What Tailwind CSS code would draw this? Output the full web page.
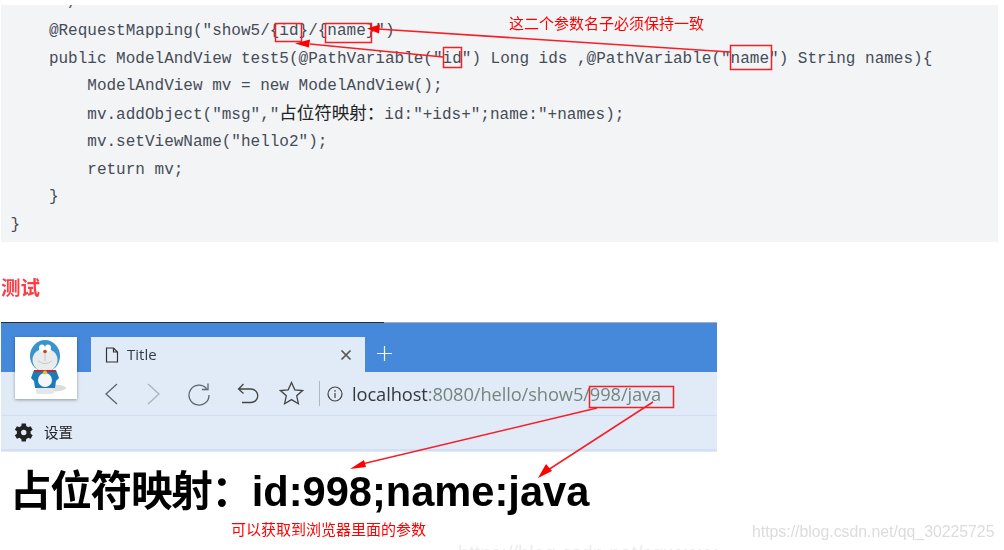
<!DOCTYPE html>
<html lang="en">
<head>
    <meta charset="UTF-8">
    <meta name="viewport" content="width=device-width, initial-scale=1.0">
    <title>占位符映射</title>
    <script src="https://cdn.jsdelivr.net/npm/@tailwindcss/browser@4"></script>
</head>
<body class="bg-white">
    <div class="relative w-[1004px] h-[550px] overflow-hidden blur-[0.35px] font-['Liberation_Sans','Noto_Sans_CJK_SC',sans-serif]">

        <!-- code block -->
        <div class="ml-[1px] mt-[5px] w-[997px] h-[237px] bg-[#f3f4f6] overflow-hidden">
            <pre class="-mt-[14.5px] pl-[9.5px] font-['Liberation_Mono','Noto_Sans_CJK_SC',monospace] text-[16px] leading-[27.57px] text-[#454c56]">     */
    @RequestMapping("show5/{id}/{name}")
    public ModelAndView test5(@PathVariable("id") Long ids ,@PathVariable("name") String names){
        ModelAndView mv = new ModelAndView();
        mv.addObject("msg","<span class="text-[17.5px] text-[#222]">占位符映射：</span>id:"+ids+";name:"+names);
        mv.setViewName("hello2");
        return mv;
    }
}</pre>
        </div>

        <h2 class="ml-[1px] mt-[35px] h-[45px] text-[19.5px] leading-[22px] font-bold text-[#fc3d45]">测试</h2>

        <!-- browser screenshot -->
        <div class="ml-[1px] w-[716px] h-[130px] flex flex-col bg-[#e1ebf8]">
            <div class="h-[1px] bg-[#a9adb2]"><div class="w-[383px] h-full bg-[#2c2c2c]"></div></div>
            <div class="h-[49px] flex items-end bg-[#4689db] pl-[90px]">
                <div class="w-[274px] h-[35px] bg-[#e1ebf8] flex items-center pl-[14px] pr-[13px]">
                    <svg class="w-[14px] h-[16px]" viewBox="0 0 14 16" fill="none" stroke="#333" stroke-width="1.2"><path d="M1.5 1h7l4 4v10h-11zM8.5 1v4h4"/></svg>
                    <span class="ml-[8px] text-[15px] text-[#333b45] font-['Open_Sans',sans-serif]">Title</span>
                    <svg class="ml-auto w-[12px] h-[12px]" viewBox="0 0 12 12" stroke="#555" stroke-width="1.7"><path d="M1.5 1.5l9 9M10.5 1.5l-9 9"/></svg>
                </div>
                <svg class="ml-[12px] mb-[11px] w-[15px] h-[15px]" viewBox="0 0 15 15" stroke="#f2f6fc" stroke-width="1.2"><path d="M7.5 0v15M0 7.5h15"/></svg>
            </div>
            <div class="h-[44px] flex items-center pl-[102px] border-b border-[#cfdef2]">
                <svg class="w-[16px] h-[24px]" viewBox="0 0 16 24" fill="none" stroke="#5b6570" stroke-width="1.3"><path d="M14 2L3 12l11 10"/></svg>
                <svg class="ml-[27px] w-[16px] h-[24px]" viewBox="0 0 16 24" fill="none" stroke="#aab2ba" stroke-width="1.3"><path d="M2 2l11 10L2 22"/></svg>
                <svg class="ml-[25px] w-[24px] h-[24px]" viewBox="0 0 24 24" fill="none" stroke="#5b6570" stroke-width="1.3"><path d="M19.5 6.5A10 10 0 1 0 22 13M21 1.5v6h-6"/></svg>
                <svg class="ml-[26px] w-[22px] h-[22px]" viewBox="0 0 22 22" fill="none" stroke="#444" stroke-width="1.3"><path d="M6.5 1L1.5 6l5 4.5M2 6h12a6.5 6.5 0 0 1 0 13.5H5"/></svg>
                <svg class="ml-[20px] w-[25px] h-[25px]" viewBox="0 0 25 25" fill="none" stroke="#444" stroke-width="1.3"><path d="M12.5 1.5l3.3 7.3 7.7.8-5.800 5.200 1.700 7.900-6.900-4.100-6.900 4.100 1.700-7.900-5.800-5.200 7.700-.8z"/></svg>
                <div class="ml-[15px] w-[1px] h-[25px] bg-[#aeb8c4]"></div>
                <svg class="ml-[7px] w-[16px] h-[16px]" viewBox="0 0 16 16" fill="none" stroke="#444" stroke-width="1.200"><circle cx="8" cy="8" r="7"/><path d="M8 7v5M8 4v1.800"/></svg>
                <span class="ml-[9px] text-[18.3px] font-['Open_Sans',sans-serif] text-[#33373d] tracking-[-0.1px]">localhost<span class="text-[#74867c]">:8080/hello/show5/998/java</span></span>
            </div>
            <div class="h-[35px] flex items-center pl-[12px] border-b-2 border-[#d3e0f3]">
                <svg class="w-[21px] h-[21px]" viewBox="0 0 24 24" fill="#222"><path d="M20.100 13.300a8 8 0 0 0 0-2.600l2.400-1.800-2.400-4.100-2.800 1.100a8 8 0 0 0-2.200-1.300L14.700 1.700H9.900l-.4 2.900a8 8 0 0 0-2.200 1.300L4.500 4.800 2.100 8.900l2.400 1.800a8 8 0 0 0 0 2.600l-2.400 1.800 2.400 4.100 2.800-1.100a8 8 0 0 0 2.200 1.300l.4 2.900h4.800l.4-2.900a8 8 0 0 0 2.200-1.300l2.800 1.100 2.400-4.100zM12.300 15.100a3.100 3.100 0 1 1 0-6.200 3.100 3.100 0 0 1 0 6.200z"/></svg>
                <span class="ml-[10px] mt-[2px] text-[14.5px] text-[#222]">设置</span>
            </div>
        </div>

        <p class="pl-[10px] mt-[15px] text-[41.6px] leading-[50px] font-bold text-black whitespace-nowrap"><span class="tracking-[-1.3px]">占位符映射：</span>id:998;name:java</p>

        <!-- Doraemon thumbnail, lies over the tab strip -->
        <div class="absolute left-[15px] top-[337px] w-[62px] h-[62px] bg-white shadow-[0_1px_3px_rgba(0,0,0,0.35)]">
            <svg class="w-[62px] h-[62px] blur-[0.5px]" viewBox="0 0 62 62">
                <ellipse cx="38" cy="51" rx="13" ry="3.500" fill="#dcdcdc"/>
                <rect x="21" y="51" width="18" height="6" rx="2" fill="#e4e7e9"/>
                <path d="M19 33h22l3 8-3 3-1 7H20l-1-7-3-3z" fill="#1c7cba"/>
                <circle cx="30" cy="43" r="7" fill="#f4f6f7"/>
                <ellipse cx="30" cy="19" rx="15" ry="16" fill="#3a94cc"/>
                <ellipse cx="30" cy="23" rx="12.500" ry="11.500" fill="#e9eced"/>
                <ellipse cx="27" cy="11" rx="3" ry="3.500" fill="#fff"/>
                <ellipse cx="33" cy="11" rx="3" ry="3.500" fill="#fff"/>
                <circle cx="30" cy="14.500" r="1.800" fill="#d03a30"/>
                <path d="M30 16v8M23 24q7 5 14 0" fill="none" stroke="#c4b5b0" stroke-width="0.7"/>
                <rect x="19" y="33" width="22" height="2" rx="1" fill="#b92c3a"/>
                <circle cx="30" cy="35.500" r="2" fill="#e6c02e"/>
            </svg>
        </div>

        <!-- red annotations drawn over the picture -->
        <svg class="absolute inset-0 w-[1004px] h-[550px] pointer-events-none" viewBox="0 0 1004 550" fill="none" stroke="#f81e26" stroke-width="1.500">
            <rect x="275.500" y="23.500" width="26" height="18"/>
            <rect x="325.500" y="23.500" width="46" height="19"/>
            <rect x="443.500" y="47.500" width="18" height="20"/>
            <rect x="730.500" y="45.500" width="41" height="24"/>
            <rect x="589.500" y="386.500" width="84" height="21"/>
            <path d="M730 52L378 29M443 57L310 44M597 408L362 464M653 402L548 470"/>
            <g fill="#ff0000" stroke="none">
                <path d="M367 28.500l13-4-1 9z"/>
                <path d="M295 43.500l15-4-1 8z"/>
                <path d="M350 469l14-9 2 7z"/>
                <path d="M538 478l8-14 6 7z"/>
            </g>
        </svg>
        <span class="absolute left-[509px] top-[14px] text-[15px] leading-[20px] text-[#f00] whitespace-nowrap">这二个参数名子必须保持一致</span>
        <span class="absolute left-[231px] top-[520px] text-[15px] leading-[20px] text-[#f00] whitespace-nowrap">可以获取到浏览器里面的参数</span>

        <!-- watermarks -->
        <span class="absolute left-[752px] top-[522px] text-[15.8px] leading-[20px] text-[#dcdcdc] whitespace-nowrap">https://blog.csdn.net/qq_30225725</span>
        <span class="absolute left-[458px] top-[543px] text-[20px] leading-[20px] text-[#ececec] whitespace-nowrap">https://blog.csdn.net/sqwwwy</span>
    </div>
</body>
</html>
